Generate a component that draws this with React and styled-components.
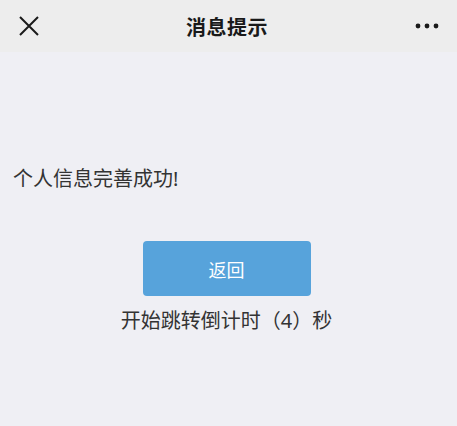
import styled, { createGlobalStyle } from 'styled-components';

const GlobalStyle = createGlobalStyle`
  html, body {
    margin: 0;
    padding: 0;
    background: #efeff4;
  }
  body {
    font-family: "Noto Sans", "Noto Sans CJK SC", sans-serif;
  }
`;

const Page = styled.div`
  width: 457px;
  height: 426px;
  display: flex;
  flex-direction: column;
  background: #efeff4;
  overflow: hidden;
`;

const TopBar = styled.div`
  height: 52px;
  display: flex;
  align-items: center;
  justify-content: space-between;
  padding: 0 18px 0 17px;
  background: #ededed;
`;

const Title = styled.div`
  font-size: 20px;
  font-weight: 700;
  color: #191919;
  letter-spacing: 0.5px;
  margin-right: 2px;
`;

const IconButton = styled.div`
  width: 24px;
  height: 24px;
  display: flex;
  align-items: center;
  justify-content: center;
`;

const Content = styled.div`
  flex: 1;
  display: flex;
  flex-direction: column;
  padding: 113px 0 0 13px;
`;

const Message = styled.div`
  font-size: 20px;
  line-height: 28px;
  color: #333;
`;

const Actions = styled.div`
  display: flex;
  flex-direction: column;
  align-items: center;
  margin-top: 48px;
  padding-right: 17px;
`;

const BackButton = styled.button`
  width: 168px;
  height: 55px;
  border: none;
  border-radius: 4px;
  background: #57a3db;
  color: #fff;
  font-family: inherit;
  font-size: 18px;
  cursor: pointer;
`;

const Countdown = styled.div`
  margin-top: 11px;
  font-size: 20px;
  line-height: 28px;
  color: #333;
`;

const CloseIcon = () => (
  <svg width="22" height="22" viewBox="0 0 22 22">
    <path d="M2 2 L20 20 M20 2 L2 20" stroke="#1a1a1a" strokeWidth="2" fill="none" />
  </svg>
);

const MoreIcon = () => (
  <svg width="24" height="8" viewBox="0 0 24 8">
    <circle cx="3" cy="4" r="2.4" fill="#1a1a1a" />
    <circle cx="12" cy="4" r="2.4" fill="#1a1a1a" />
    <circle cx="21" cy="4" r="2.4" fill="#1a1a1a" />
  </svg>
);

const App = () => {
  return (
    <Page>
      <GlobalStyle />
      <TopBar>
        <IconButton><CloseIcon /></IconButton>
        <Title>消息提示</Title>
        <IconButton><MoreIcon /></IconButton>
      </TopBar>
      <Content>
        <Message>个人信息完善成功!</Message>
        <Actions>
          <BackButton>返回</BackButton>
          <Countdown>开始跳转倒计时（4）秒</Countdown>
        </Actions>
      </Content>
    </Page>
  );
};

export default App;
